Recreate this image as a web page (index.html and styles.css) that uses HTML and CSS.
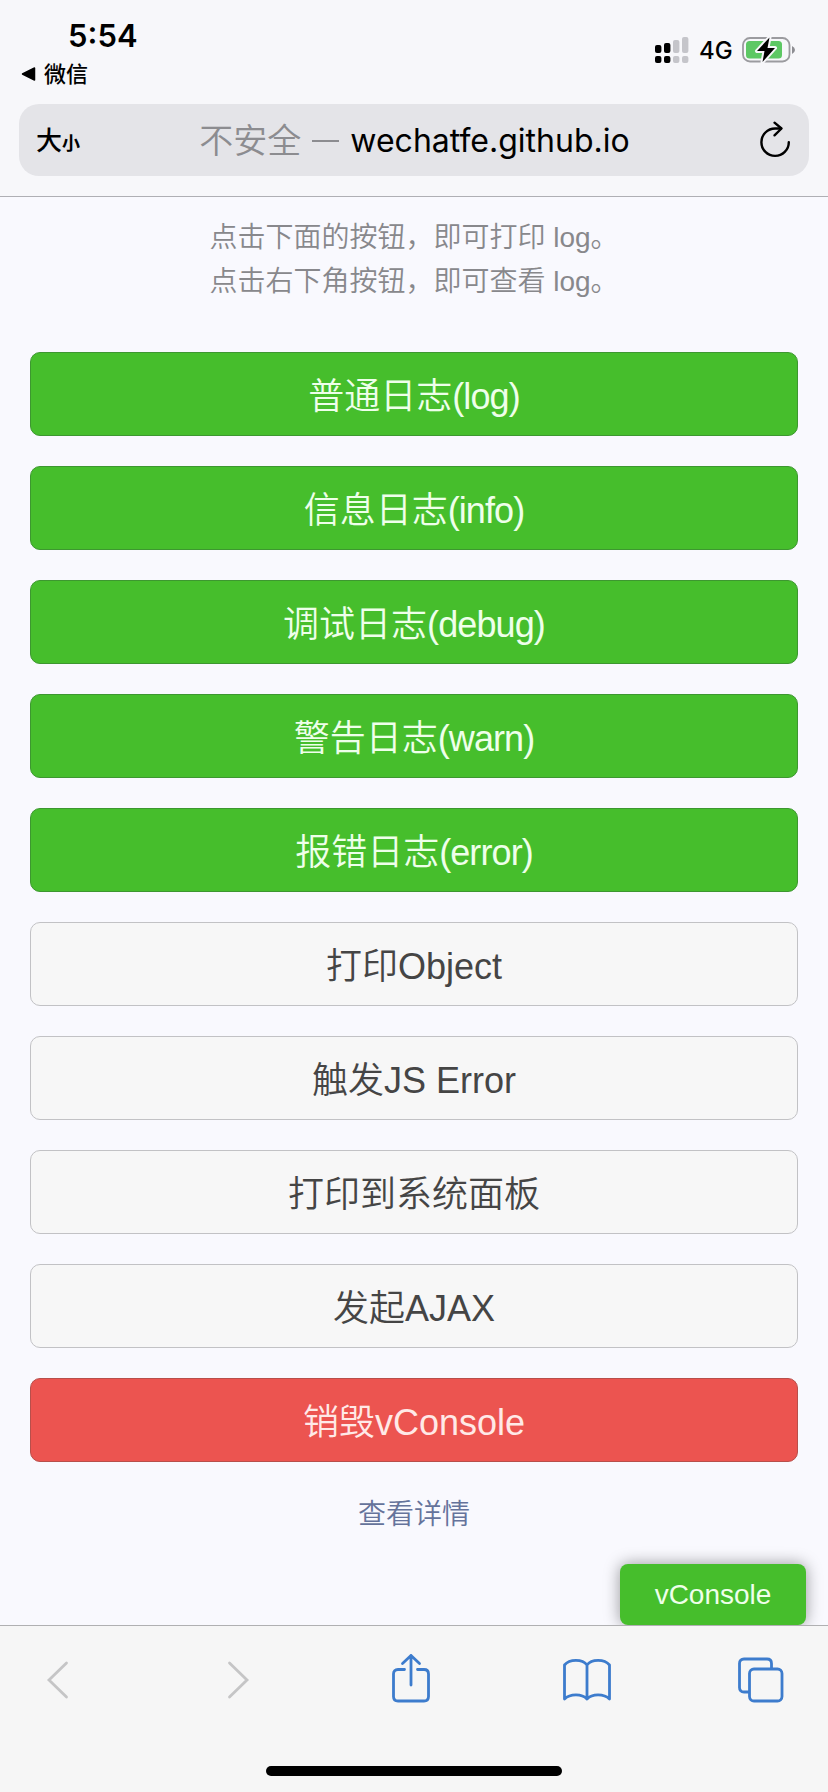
FILE: index.html
```html
<!DOCTYPE html>
<html lang="zh-CN">
<head>
<meta charset="utf-8">
<meta name="viewport" content="width=device-width">
<title>vConsole</title>
<link rel="stylesheet" href="styles.css">
</head>
<body>
<div class="screen">
  <header class="browser-top">
    <div class="status">
      <div class="status-left">
        <div class="time">5:54</div>
        <div class="back-app"><svg width="15" height="14" viewBox="0 0 15 14"><path d="M1.5 7 13.5 1V13Z" fill="#000" stroke="#000" stroke-width="1.5" stroke-linejoin="round"/></svg><span>微信</span></div>
      </div>
      <div class="status-right">
        <svg class="signal" width="34" height="28" viewBox="0 0 34 28">
          <g fill="#000"><rect x="0" y="9" width="6.4" height="8" rx="2"/><rect x="9" y="7" width="6.4" height="10" rx="2"/><rect x="0" y="20" width="6.4" height="7" rx="2"/><rect x="9" y="20" width="6.4" height="7" rx="2"/></g>
          <g fill="#c5c5ca"><rect x="18" y="4" width="6.4" height="13" rx="2"/><rect x="27" y="1" width="6.4" height="16" rx="2"/><rect x="18" y="20" width="6.4" height="7" rx="2"/><rect x="27" y="20" width="6.4" height="7" rx="2"/></g>
        </svg>
        <span class="network">4G</span>
        <svg class="battery" width="54" height="28" viewBox="0 0 54 28">
          <rect x="1" y="2" width="46.5" height="23.5" rx="7" fill="none" stroke="#9b9b9f" stroke-width="1.8"/>
          <rect x="4" y="5" width="36" height="17.5" rx="3.5" fill="#5dc864"/>
          <path d="M50 10V18Q53 16.5 53 14T50 10Z" fill="#8d8d92"/>
          <path d="M27.5 1.5 15 15H22.5L20.5 26 33 12H25.5Z" fill="#000" stroke="#f7f7fa" stroke-width="4" stroke-linejoin="round" paint-order="stroke"/>
        </svg>
      </div>
    </div>
    <div class="address">
      <div class="text-size"><span class="big">大</span><span class="small">小</span></div>
      <div class="url"><span class="insecure">不安全</span><span class="dash"></span><span class="domain">wechatfe.github.io</span></div>
      <svg class="reload" width="34" height="38" viewBox="0 0 34 38" fill="none" stroke="#000" stroke-width="2.4" stroke-linecap="round" stroke-linejoin="round"><path d="M29.8 21.2A13.7 13.7 0 1 1 16.1 7.5H22"/><path d="M15.5 1.7 22.5 7.5 15.5 14.3"/></svg>
    </div>
  </header>

  <main class="page">
    <p class="intro">点击下面的按钮，即可打印 log。<br>点击右下角按钮，即可查看 log。</p>
    <div class="buttons">
      <a class="btn primary">普通日志<span class="level">(log)</span></a>
      <a class="btn primary">信息日志<span class="level">(info)</span></a>
      <a class="btn primary">调试日志<span class="level">(debug)</span></a>
      <a class="btn primary">警告日志<span class="level">(warn)</span></a>
      <a class="btn primary">报错日志<span class="level">(error)</span></a>
      <a class="btn plain">打印Object</a>
      <a class="btn plain">触发JS Error</a>
      <a class="btn plain">打印到系统面板</a>
      <a class="btn plain">发起AJAX</a>
      <a class="btn warn">销毁vConsole</a>
    </div>
    <a class="details">查看详情</a>
    <div class="console-switch">vConsole</div>
  </main>

  <footer class="toolbar">
    <div class="tools">
      <svg width="24" height="40" viewBox="0 0 24 40" fill="none" stroke="#c5c5c6" stroke-width="2.8" stroke-linecap="round"><path d="M20.5 3 3 20 20.5 37"/></svg>
      <svg width="24" height="40" viewBox="0 0 24 40" fill="none" stroke="#c5c5c6" stroke-width="2.8" stroke-linecap="round"><path d="M3.5 3 21 20 3.5 37"/></svg>
      <svg class="share" width="40" height="52" viewBox="0 0 40 52" fill="none" stroke="#3d7ccd" stroke-width="2.8" stroke-linecap="round" stroke-linejoin="round"><path d="M13.5 17.5H7Q2.5 17.5 2.5 22V44.5Q2.5 49 7 49H33Q37.5 49 37.5 44.5V22Q37.5 17.5 33 17.5H26.5"/><path d="M20 33V3.5M11.5 11.5 20 3.5 28.5 11.5"/></svg>
      <svg width="50" height="44" viewBox="0 0 50 44" fill="none" stroke="#3d7ccd" stroke-width="2.8" stroke-linecap="round" stroke-linejoin="round"><path d="M25 7C20.5 .8 7.5 .8 2.5 7V41C8 35.5 20 35.5 25 41C30 35.5 42 35.5 47.5 41V7C42.5 .8 29.5 .8 25 7V41"/></svg>
      <svg width="48" height="48" viewBox="0 0 48 48" fill="none" stroke="#3d7ccd" stroke-width="2.8" stroke-linejoin="round"><path d="M12.5 36H7Q2.5 36 2.5 31.5V7.5Q2.5 3 7 3H30Q34.5 3 34.5 7.5V13"/><rect x="12.5" y="13" width="32.5" height="32" rx="4.5"/></svg>
    </div>
    <div class="home"></div>
  </footer>
</div>
</body>
</html>
```
FILE: styles.css
```css
* { box-sizing: border-box; }

body {
  margin: 0;
  background: #f9f9fe;
  font-family: "Liberation Sans", "Noto Sans CJK SC", sans-serif;
}

svg { display: block; flex: none; }

.screen {
  display: flex;
  flex-direction: column;
  width: 828px;
  height: 1792px;
  overflow: hidden;
}

.browser-top {
  flex: none;
  height: 197px;
  background: #f7f7fa;
  border-bottom: 1px solid #afafb4;
}

.status {
  display: flex;
  justify-content: space-between;
  height: 104px;
  padding: 17px 32px 0 21px;
  font-family: Inter, "Noto Sans CJK SC", sans-serif;
}

.time {
  padding-left: 47px;
  font-size: 31px;
  font-weight: 600;
  line-height: 38px;
}

.back-app {
  display: flex;
  align-items: center;
  gap: 8px;
  margin-top: 3px;
  font-size: 22px;
  font-weight: 500;
  line-height: 32px;
}

.status-right {
  display: flex;
  align-items: center;
  height: 28px;
  margin-top: 19px;
}

.network {
  margin: 2px 0 0 10px;
  width: 43px;
  font-size: 24px;
  font-weight: 500;
  line-height: 28px;
}

.address {
  display: grid;
  grid-template-columns: 100px 1fr 100px;
  align-items: center;
  height: 72px;
  margin: 0 19px;
  padding: 0 16px 0 17px;
  border-radius: 20px;
  background: #e4e4e8;
  font-family: Inter, "Noto Sans CJK SC", sans-serif;
}

.text-size {
  display: flex;
  align-items: baseline;
  padding-top: 5px;
  line-height: 40px;
}

.big { font-size: 26px; font-weight: 500; }
.small { font-size: 18px; font-weight: 700; }

.url {
  display: flex;
  align-items: center;
  justify-content: center;
  padding-top: 2px;
  white-space: nowrap;
  font-size: 32px;
  line-height: 48px;
}

.insecure { color: #8c8c90; font-size: 34px; font-weight: 350; }
.dash { width: 27px; height: 2px; margin: 0 11px; background: #8c8c90; }

.reload { justify-self: end; }

.page {
  position: relative;
  display: flex;
  flex-direction: column;
  flex: 1;
  padding: 19px 30px 0;
}

.intro {
  margin: 0 0 48px;
  text-align: center;
  color: #88888c;
  font-size: 28px;
  font-weight: 350;
  line-height: 44px;
}

.buttons { display: grid; gap: 30px; }

.btn {
  display: block;
  height: 84px;
  padding-top: 3px;
  border: 1px solid;
  border-radius: 10px;
  font-size: 36px;
  font-weight: 350;
  line-height: 81px;
  text-align: center;
  white-space: pre;
}

.level { letter-spacing: -.9px; }

.primary { color: #eeffea; background: #46be2c; border-color: #3d9730; }
.plain { color: #454545; background: #f7f7f7; border-color: #c2c2c5; }
.warn { color: #ffe9e7; background: #ec5450; border-color: #b84f4b; }

.details {
  align-self: center;
  margin-top: 33px;
  color: #65739b;
  font-size: 28px;
  font-weight: 350;
  line-height: 40px;
}

.console-switch {
  position: absolute;
  right: 22px;
  bottom: 0;
  width: 186px;
  height: 61px;
  border-radius: 8px;
  background: #46be2c;
  box-shadow: 0 0 16px rgba(0, 0, 0, .4);
  color: #eeffea;
  font-size: 28px;
  line-height: 62px;
  text-align: center;
}

.toolbar {
  position: relative;
  display: flex;
  flex-direction: column;
  justify-content: space-between;
  align-items: center;
  flex: none;
  height: 167px;
  padding-bottom: 16px;
  background: #f6f6f6;
  border-top: 1px solid #b0b0b2;
}

.tools {
  display: grid;
  grid-template-columns: 180px 165px 171px 175px 48px;
  align-items: center;
  width: 100%;
  height: 108px;
  padding-left: 46px;
}

.share { margin-bottom: 4px; }

.home { width: 296px; height: 10px; border-radius: 5px; background: #000; }
```
